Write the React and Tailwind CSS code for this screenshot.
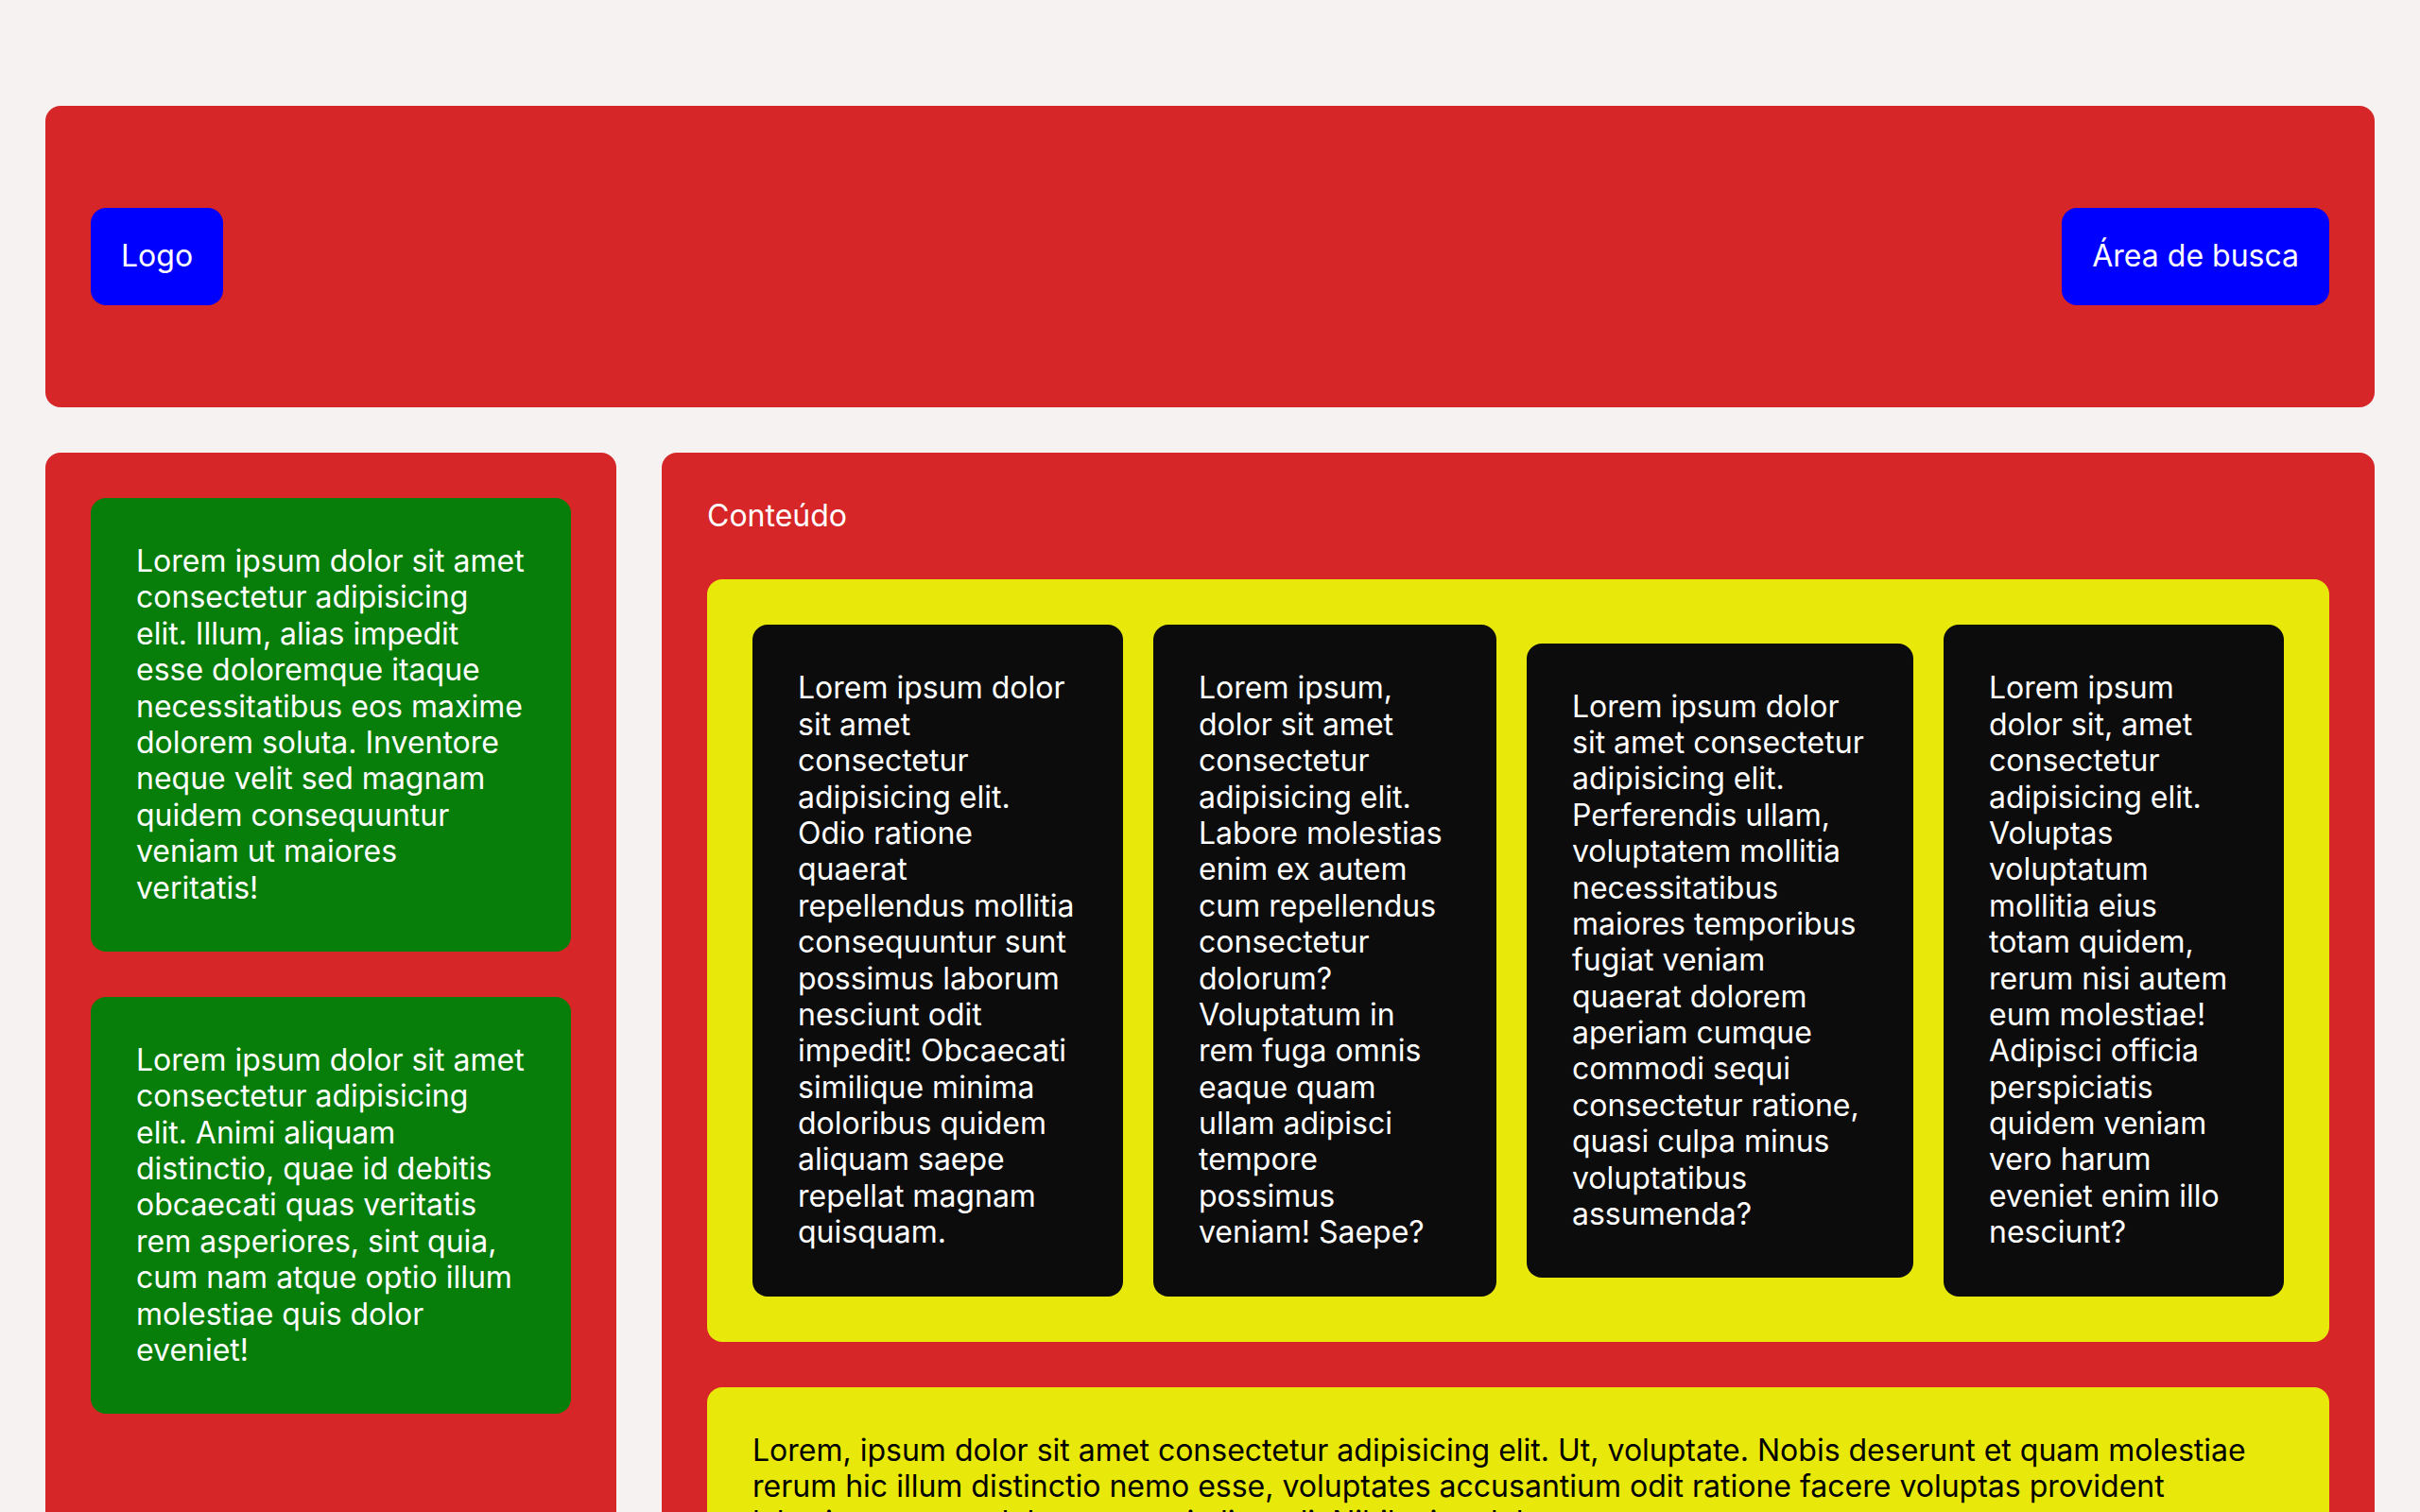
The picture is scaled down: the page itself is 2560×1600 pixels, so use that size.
export default function App() {
  const cards = [
    {
      w: "w-[392px]",
      text: "Lorem ipsum dolor sit amet consectetur adipisicing elit. Odio ratione quaerat repellendus mollitia consequuntur sunt possimus laborum nesciunt odit impedit! Obcaecati similique minima doloribus quidem aliquam saepe repellat magnam quisquam.",
    },
    {
      w: "w-[363px]",
      text: "Lorem ipsum, dolor sit amet consectetur adipisicing elit. Labore molestias enim ex autem cum repellendus consectetur dolorum? Voluptatum in rem fuga omnis eaque quam ullam adipisci tempore possimus veniam! Saepe?",
    },
    {
      w: "w-[409px]",
      text: "Lorem ipsum dolor sit amet consectetur adipisicing elit. Perferendis ullam, voluptatem mollitia necessitatibus maiores temporibus fugiat veniam quaerat dolorem aperiam cumque commodi sequi consectetur ratione, quasi culpa minus voluptatibus assumenda?",
    },
    {
      w: "w-[360px]",
      text: "Lorem ipsum dolor sit, amet consectetur adipisicing elit. Voluptas voluptatum mollitia eius totam quidem, rerum nisi autem eum molestiae! Adipisci officia perspiciatis quidem veniam vero harum eveniet enim illo nesciunt?",
    },
  ];
  return (
    <div
      className="min-h-[1600px] bg-[#f6f2f1] px-12 pt-[112px] text-[32px] leading-[1.2] text-white"
      style={{ fontFamily: "Inter, 'Noto Sans', sans-serif" }}
    >
      <header className="flex h-[319px] items-center justify-between rounded-2xl bg-[#d62627] px-12">
        <div className="rounded-2xl bg-[#0000ff] p-8">Logo</div>
        <div className="rounded-2xl bg-[#0000ff] p-8">Área de busca</div>
      </header>
      <div className="mt-12 grid grid-cols-[1fr_3fr] items-start gap-12">
        <aside className="flex min-h-[1200px] flex-col gap-12 rounded-2xl bg-[#d62627] p-12">
          <div className="rounded-2xl bg-[#077d0a] p-12">
            Lorem ipsum dolor sit amet consectetur adipisicing elit. Illum, alias impedit esse doloremque itaque necessitatibus eos maxime dolorem soluta. Inventore neque velit sed magnam quidem consequuntur veniam ut maiores veritatis!
          </div>
          <div className="rounded-2xl bg-[#077d0a] p-12">
            Lorem ipsum dolor sit amet consectetur adipisicing elit. Animi aliquam distinctio, quae id debitis obcaecati quas veritatis rem asperiores, sint quia, cum nam atque optio illum molestiae quis dolor eveniet!
          </div>
        </aside>
        <main className="flex flex-col gap-12 rounded-2xl bg-[#d62627] p-12">
          <div>Conteúdo</div>
          <div className="flex items-center gap-8 rounded-2xl bg-[#e8e80a] p-12">
            {cards.map((c, i) => (
              <div key={i} className={`${c.w} shrink-0 rounded-2xl bg-[#0c0c0c] p-12`}>
                {c.text}
              </div>
            ))}
          </div>
          <div className="rounded-2xl bg-[#e8e80a] p-12 text-black">
            Lorem, ipsum dolor sit amet consectetur adipisicing elit. Ut, voluptate. Nobis deserunt et quam molestiae rerum hic illum distinctio nemo esse, voluptates accusantium odit ratione facere voluptas provident laboriosam, quo dolorum sequi eligendi. Nihil, eius dolorum.
          </div>
        </main>
      </div>
    </div>
  );
}
